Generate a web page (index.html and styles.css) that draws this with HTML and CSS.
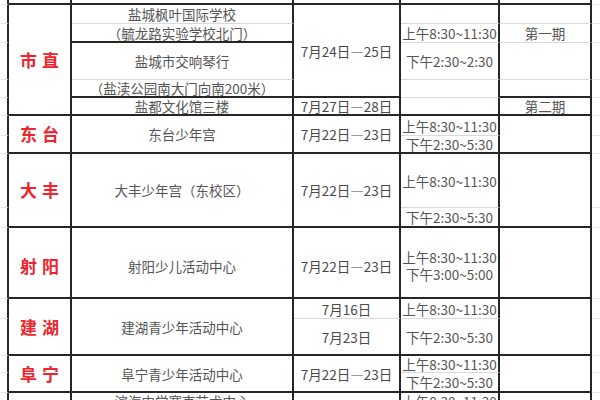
FILE: index.html
```html
<!DOCTYPE html>
<html lang="zh">
<head>
<meta charset="utf-8">
<title>培训安排</title>
<link rel="stylesheet" href="styles.css">
</head>
<body>
<div class="sheet">
  <!-- row 0 -->
  <div class="m ml"></div><div class="c"></div><div class="c"></div><div class="c"></div><div class="c"></div><div class="c"></div><div class="m"></div>
  <!-- r1 -->
  <div class="m ml"></div>
  <div class="c lab r5">市直</div>
  <div class="c g">盐城枫叶国际学校</div>
  <div class="c r4 dt">7月24日—25日</div>
  <div class="c g"></div>
  <div class="c g"></div>
  <div class="m"></div>
  <!-- r2 -->
  <div class="m ml"></div>
  <div class="c">（毓龙路实验学校北门）</div>
  <div class="c g">上午8:30~11:30</div>
  <div class="c g">第一期</div>
  <div class="m"></div>
  <!-- r3 -->
  <div class="m ml"></div>
  <div class="c g">盐城市交响琴行</div>
  <div class="c g">下午2:30~2:30</div>
  <div class="c g"></div>
  <div class="m"></div>
  <!-- r4 -->
  <div class="m ml"></div>
  <div class="c">（盐渎公园南大门向南200米）</div>
  <div class="c g"></div>
  <div class="c"></div>
  <div class="m"></div>
  <!-- r5 -->
  <div class="m ml"></div>
  <div class="c">盐都文化馆三楼</div>
  <div class="c dt">7月27日—28日</div>
  <div class="c"></div>
  <div class="c">第二期</div>
  <div class="m"></div>
  <!-- r6 -->
  <div class="m ml"></div>
  <div class="c lab r2">东台</div>
  <div class="c r2">东台少年宫</div>
  <div class="c r2 dt">7月22日—23日</div>
  <div class="c g">上午8:30~11:30</div>
  <div class="c r2"></div>
  <div class="m"></div>
  <!-- r7 -->
  <div class="m ml"></div>
  <div class="c">下午2:30~5:30</div>
  <div class="m"></div>
  <!-- r8 -->
  <div class="m ml"></div>
  <div class="c lab r2">大丰</div>
  <div class="c r2">大丰少年宫（东校区）</div>
  <div class="c r2 dt">7月22日—23日</div>
  <div class="c g">上午8:30~11:30</div>
  <div class="c r2"></div>
  <div class="m"></div>
  <!-- r9 -->
  <div class="m ml"></div>
  <div class="c">下午2:30~5:30</div>
  <div class="m"></div>
  <!-- r10 -->
  <div class="m ml"></div>
  <div class="c lab lo">射阳</div>
  <div class="c lo">射阳少儿活动中心</div>
  <div class="c lo dt">7月22日—23日</div>
  <div class="c lo col"><span>上午8:30~11:30</span><span>下午3:00~5:00</span></div>
  <div class="c"></div>
  <div class="m"></div>
  <!-- r11 -->
  <div class="m ml"></div>
  <div class="c lab r2">建湖</div>
  <div class="c r2">建湖青少年活动中心</div>
  <div class="c g dt">7月16日</div>
  <div class="c g">上午8:30~11:30</div>
  <div class="c r2"></div>
  <div class="m"></div>
  <!-- r12 -->
  <div class="m ml"></div>
  <div class="c dt">7月23日</div>
  <div class="c">下午2:30~5:30</div>
  <div class="m"></div>
  <!-- r13 -->
  <div class="m ml"></div>
  <div class="c lab r2">阜宁</div>
  <div class="c r2">阜宁青少年活动中心</div>
  <div class="c r2 dt">7月22日—23日</div>
  <div class="c g">上午8:30~11:30</div>
  <div class="c r2"></div>
  <div class="m"></div>
  <!-- r14 -->
  <div class="m ml"></div>
  <div class="c">下午2:30~5:30</div>
  <div class="m"></div>
  <!-- r15 -->
  <div class="m ml"></div>
  <div class="c top"></div>
  <div class="c top">滨海中学赛克艺术中心</div>
  <div class="c top"></div>
  <div class="c top">上午8:30~11:30</div>
  <div class="c top"></div>
  <div class="m"></div>
</div>
</body>
</html>
```

FILE: styles.css
```css
* {
  box-sizing: border-box;
  margin: 0;
  padding: 0;
}

html,
body {
  width: 600px;
  height: 400px;
  overflow: hidden;
  background: #ffffff;
}

body {
  font-family: "Noto Sans CJK SC", "Microsoft YaHei", sans-serif;
  font-size: 13.5px;
  color: #555555;
}

.sheet {
  display: grid;
  grid-template-columns: 9px 63px 222px 107px 99px 92px 8px;
  grid-template-rows: 5px 19px 19px 37px 18px 18px 20px 18px 54px 20px 71px 20px 37px 17px 20px 27px;
}

.c {
  border-right: 2px solid #262626;
  border-bottom: 2px solid #262626;
  display: flex;
  align-items: center;
  justify-content: center;
  text-align: center;
  line-height: 16px;
  white-space: nowrap;
}

.col {
  flex-direction: column;
  gap: 1px;
}

.g {
  border-bottom: 1px solid #d9d9d9;
}

.m {
  border-bottom: 1px solid #e6e6e6;
}

.ml {
  border-right: 2px solid #262626;
}

.r2 {
  grid-row: span 2;
}

.r4 {
  grid-row: span 4;
}

.r5 {
  grid-row: span 5;
}

.dt {
  color: #4a4a4a;
}

.lab {
  color: #f0242c;
  font-weight: 700;
  font-size: 17px;
  letter-spacing: 5px;
  padding-left: 5px;
}

.lo {
  padding-top: 6px;
}

.top {
  align-items: flex-start;
  overflow: hidden;
}
```
